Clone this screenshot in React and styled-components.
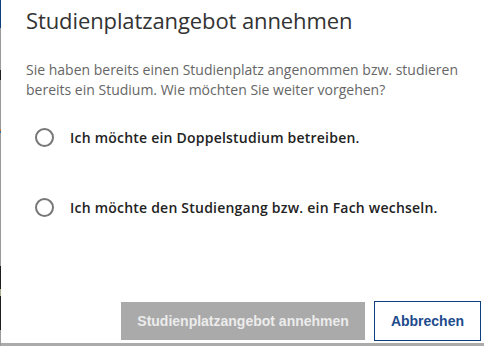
import React from "react";
import styled, { createGlobalStyle } from "styled-components";

const Global = createGlobalStyle`
  html, body { margin: 0; padding: 0; background: #fff; overflow: hidden; }
  body { font-family: "Open Sans", "Liberation Sans", sans-serif; }
  * { box-sizing: border-box; }
`;

const Screen = styled.div`
  display: flex;
  width: 484px;
  height: 346px;
`;

const BackdropEdge = styled.div`
  width: 1px;
  flex: none;
  background: linear-gradient(
    to bottom,
    #0b3f7e 0px, #0b3f7e 28px,
    #9a9a9a 28px, #9a9a9a 70px,
    #222 70px, #222 80px,
    #9a9a9a 80px, #9a9a9a 129px,
    #c07a3a 129px, #c07a3a 131px,
    #3a6aa0 131px, #3a6aa0 133px,
    #9a9a9a 133px, #9a9a9a 266px,
    #1e1e1e 266px, #1e1e1e 289px,
    #a8a88a 289px, #a8a88a 296px,
    #1e1e1e 296px, #1e1e1e 330px,
    #9a9a9a 330px
  );
`;

const Dialog = styled.div`
  flex: 1;
  display: flex;
  flex-direction: column;
  background: #fff;
  border-bottom: 3px solid #ababab;
  padding: 5px 3px 2px 25px;
`;

const Title = styled.h1`
  margin: 0;
  font-family: "Open Sans", sans-serif;
  font-weight: 400;
  font-size: 22px;
  line-height: 30px;
  color: #333;
  letter-spacing: -0.1px;
`;

const Intro = styled.p`
  margin: 25px 0 0;
  font-size: 14px;
  line-height: 20px;
  color: #666;
`;

const Options = styled.div`
  display: flex;
  flex-direction: column;
  gap: 30px;
  margin-top: 17px;
  padding-left: 9px;
`;

const Option = styled.label`
  display: flex;
  align-items: center;
  gap: 16px;
  height: 40px;
  cursor: pointer;
`;

const Circle = styled.span`
  width: 19px;
  height: 19px;
  border-radius: 50%;
  border: 2px solid #777;
  flex: none;
`;

const OptionText = styled.span`
  font-size: 14px;
  font-weight: 600;
  letter-spacing: 0.22px;
  color: #222;
`;

const Footer = styled.div`
  margin-top: auto;
  display: flex;
  justify-content: flex-end;
  align-items: center;
  gap: 9px;
`;

const Button = styled.button`
  font-family: "Liberation Sans", Arial, sans-serif;
  font-weight: 700;
  font-size: 14px;
  height: ${(p) => (p.$primary ? "38px" : "40px")};
  padding: 0 16px;
  border: ${(p) => (p.$primary ? "none" : "1px solid #0b3f7e")};
  background: ${(p) => (p.$primary ? "#aaaaaa" : "#fff")};
  color: ${(p) => (p.$primary ? "#ececec" : "#1e4b8c")};
  border-radius: 0;
  cursor: pointer;
`;

export default function App() {
  return (
    <>
      <Global />
      <Screen>
        <BackdropEdge />
        <Dialog>
          <Title>Studienplatzangebot annehmen</Title>
          <Intro>
            Sie haben bereits einen Studienplatz angenommen bzw. studieren
            <br />
            bereits ein Studium. Wie möchten Sie weiter vorgehen?
          </Intro>
          <Options>
            <Option>
              <Circle />
              <OptionText>Ich möchte ein Doppelstudium betreiben.</OptionText>
            </Option>
            <Option>
              <Circle />
              <OptionText>Ich möchte den Studiengang bzw. ein Fach wechseln.</OptionText>
            </Option>
          </Options>
          <Footer>
            <Button $primary disabled>Studienplatzangebot annehmen</Button>
            <Button>Abbrechen</Button>
          </Footer>
        </Dialog>
      </Screen>
    </>
  );
}
